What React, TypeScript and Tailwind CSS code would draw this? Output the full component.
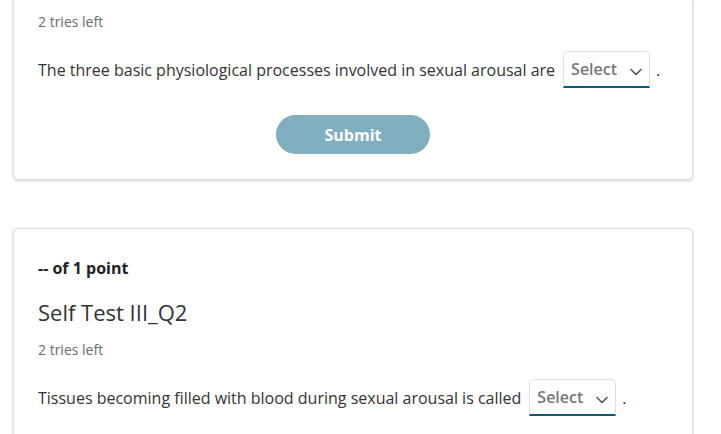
import React from "react";

function Chevron() {
  return (
    <svg width="12" height="8" viewBox="0 0 12 8" fill="none" className="ml-[13px] mt-[5px]">
      <path d="M1 1.5 L6 6.5 L11 1.5" stroke="#555" strokeWidth="1.6" strokeLinecap="round" strokeLinejoin="round" />
    </svg>
  );
}

function SelectBox() {
  return (
    <span className="inline-flex items-center h-[37px] px-[7px] ml-[8px] mr-[6px] rounded-t-[5px] border border-[#e0e0e0] border-b-2 border-b-[#0e5a76] bg-white align-middle">
      <span className="text-[16px] font-semibold text-[#777] leading-none">Select</span>
      <Chevron />
    </span>
  );
}

function Question({ text }: { text: string }) {
  return (
    <div className="flex items-center text-[16px] text-[#333] leading-[24px]">
      <span>{text}</span>
      <SelectBox />
      <span>.</span>
    </div>
  );
}

export default function App() {
  return (
    <div
      className="w-[721px] h-[434px] overflow-hidden bg-white"
      style={{ fontFamily: '"Open Sans", "Noto Sans", sans-serif' }}
    >
      <div className="flex flex-col gap-[48px]">
        {/* Card 1 (continued from above the fold) */}
        <div className="ml-[13px] w-[680px] bg-white border border-t-0 border-[#dcdcdc] rounded-b-[5px] shadow-[0_1px_3px_rgba(0,0,0,0.18)] px-[24px] pt-[12px] pb-[25px]">
          <div className="text-[14px] text-[#6b6b6b] leading-[20px]">2 tries left</div>
          <div className="mt-[19px]">
            <Question text="The three basic physiological processes involved in sexual arousal are" />
          </div>
          <div className="mt-[27px] flex justify-center">
            <button className="w-[154px] h-[39px] rounded-full bg-[#80afc0] text-white text-[16px] font-bold">
              Submit
            </button>
          </div>
        </div>

        {/* Card 2 */}
        <div className="ml-[13px] w-[680px] bg-white border border-[#dcdcdc] rounded-[5px] shadow-[0_1px_3px_rgba(0,0,0,0.18)] px-[24px] pt-[27px] pb-[26px]">
          <div className="text-[16px] font-bold text-[#222] leading-[24px]">-- of 1 point</div>
          <div className="mt-[17px] text-[22px] text-[#333] leading-[30px]">Self Test III_Q2</div>
          <div className="mt-[13px] text-[14px] text-[#6b6b6b] leading-[20px]">2 tries left</div>
          <div className="mt-[19px]">
            <Question text="Tissues becoming filled with blood during sexual arousal is called" />
          </div>
        </div>
      </div>
    </div>
  );
}
